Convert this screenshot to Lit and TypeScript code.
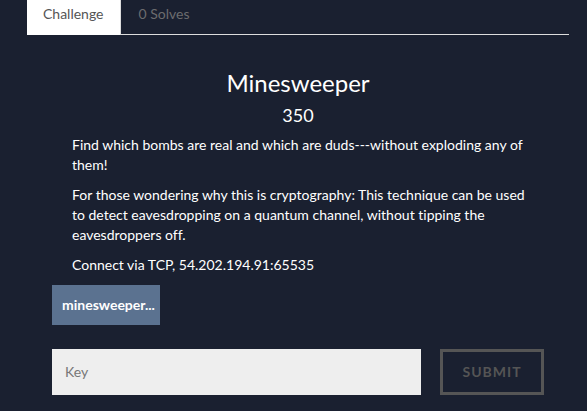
import { LitElement, html, css } from "lit";
import { customElement } from "lit/decorators.js";

@customElement("app-root")
export class AppRoot extends LitElement {
  static styles = css`
    :host {
      display: block;
      min-height: 100vh;
      box-sizing: border-box;
      background: #1a2030;
      color: #fff;
      font: 14px/20px Lato, "Liberation Sans", sans-serif;
      font-variant-ligatures: none;
      padding: 0 18px 16px 27px;
    }
    * { box-sizing: border-box; }
    .tabs {
      display: flex;
      height: 35px;
      align-items: flex-start;
      border-bottom: 1px solid #ddd;
    }
    .tab {
      font: inherit;
      border: 0;
      background: none;
      color: #6c6c6e;
      height: 34px;
      padding: 0 16px 6px;
      margin-right: 2px;
    }
    .tab.active {
      background: #fff;
      color: #555;
      height: 35px;
      padding-bottom: 8px;
      border-right: 1px solid #ddd;
    }
    .body { padding: 32px 25px 0; }
    h1, h2 { margin: 0; font-weight: 400; text-align: center; }
    h1 { font-size: 24px; line-height: 32px; }
    h2 { font-size: 18px; line-height: 32px; margin-bottom: 4px; }
    .text { padding: 0 8px 0 20px; }
    p { margin: 0 0 10px; }
    .file {
      display: inline-flex;
      align-items: center;
      height: 40px;
      padding: 0 5px 0 10px;
      background: #5b7290;
      color: #fff;
      font-weight: 700;
      text-decoration: none;
    }
    form { display: flex; gap: 19px; margin-top: 24px; }
    input {
      flex: 1;
      min-width: 0;
      height: 46px;
      border: 0;
      padding: 0 13px 2px;
      background: #eee;
      color: #333;
      font: inherit;
    }
    input::placeholder { color: #777; opacity: 1; }
    .submit {
      height: 46px;
      width: 104px;
      border: 3px solid #555;
      background: none;
      color: #555;
      font: inherit;
      font-weight: 700;
      letter-spacing: 1px;
    }
  `;

  render() {
    return html`
      <nav class="tabs" role="tablist">
        <button class="tab active" role="tab" aria-selected="true">Challenge</button>
        <button class="tab" role="tab" aria-selected="false">0 Solves</button>
      </nav>
      <main class="body">
        <h1>Minesweeper</h1>
        <h2>350</h2>
        <div class="text">
          <p>Find which bombs are real and which are duds---without exploding any of them!</p>
          <p>For those wondering why this is cryptography: This technique can be used to detect eavesdropping on a quantum channel, without tipping the eavesdroppers off.</p>
          <p>Connect via TCP, 54.202.194.91:65535</p>
        </div>
        <a class="file" href="#">minesweeper...</a>
        <form @submit=${(e: Event) => e.preventDefault()}>
          <input type="text" placeholder="Key" aria-label="Key" />
          <button class="submit">SUBMIT</button>
        </form>
      </main>
    `;
  }
}
